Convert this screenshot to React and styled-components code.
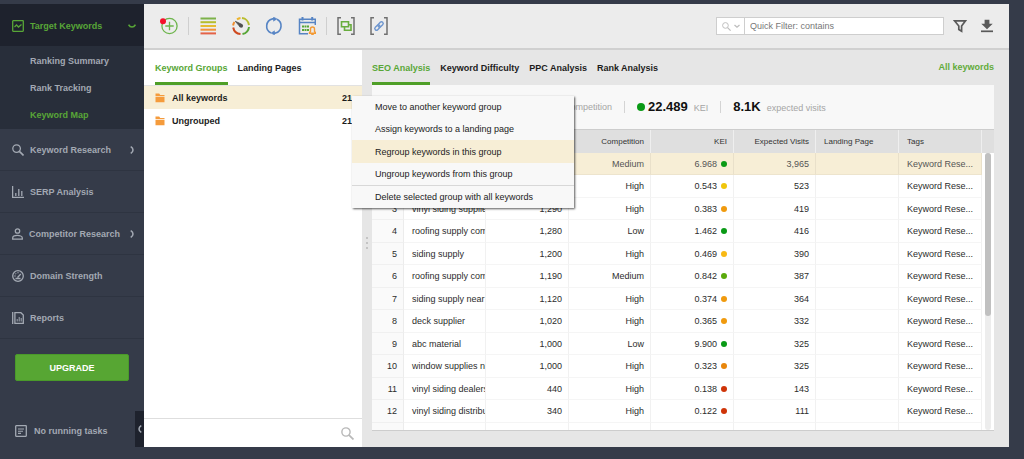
import styled, { createGlobalStyle, css } from "styled-components";

const GlobalStyle = createGlobalStyle`
  * {
    box-sizing: border-box;
  }

  body {
    margin: 0;

    background: #353b49;
    color: #222;
    font: 9px/12px "Liberation Sans", Arial, sans-serif;
  }

  button,
  input {
    margin: 0;
    padding: 0;

    border: 0;
    background: none;
    color: inherit;
    font: inherit;
  }

  a {
    color: inherit;
    text-decoration: none;
  }

  svg {
    display: block;
    flex: none;
  }
`;

const StyledApp = styled.div`
  height: 100vh;
  padding: 4px 15px 12px 0;

  display: flex;
`;

const StyledSidebar = styled.aside`
  position: relative;
  width: 144px;

  display: flex;
  flex: none;
  flex-direction: column;

  color: #a3a9b3;
  font-weight: bold;
`;

const StyledNavItem = styled.a`
  height: 42px;
  padding: 0 8px 0 12px;

  display: flex;
  align-items: center;
  gap: 6px;

  border-bottom: 1px solid #2e3441;

  svg:last-child:not(:first-child) {
    margin-left: auto;
  }

  ${(props) =>
    props.$active &&
    css`
      padding-top: 2px;

      border-bottom: 0;
      background: #1e222d;
      color: #58a637;
    `}
`;

const StyledSubNav = styled.div`
  height: 83px;
  padding: 2px 0 0 30px;

  display: flex;
  flex-direction: column;

  background: #282e3a;
`;

const StyledSubLink = styled.a`
  line-height: 27px;
  color: ${(props) => (props.$active ? "#58a637" : "inherit")};
`;

const StyledUpgrade = styled.button`
  height: 27px;
  margin: 15px 15px 0;

  border: 1px solid #4a9a2a;
  border-radius: 2px;
  background: #57a633;
  color: #fff;
  font-weight: bold;
`;

const StyledTasks = styled.div`
  margin: auto 0 10px 15px;

  display: flex;
  align-items: center;
  gap: 7px;
`;

const StyledCollapse = styled.button`
  position: absolute;
  right: 0;
  bottom: 0;
  width: 9px;
  height: 36px;

  display: grid;
  place-items: center;

  background: #1e222d;
`;

const StyledMain = styled.main`
  min-width: 0;

  display: flex;
  flex: 1;
  flex-direction: column;

  background: #e6e6e6;
`;

const StyledToolbar = styled.header`
  height: 46px;
  padding: 0 15px 0 16px;

  display: flex;
  flex: none;
  align-items: center;

  border-bottom: 2px solid #d0d0d0;
  background: #ececec;
`;

const StyledTools = styled.div`
  display: flex;
  gap: 15px;
`;

const StyledDivider = styled.span`
  width: 1px;
  height: 18px;
  margin: 0 10px;

  background: #cfcfcf;
`;

const StyledFilter = styled.div`
  width: 228px;
  height: 18px;
  margin-left: auto;

  display: flex;

  border: 1px solid #cecece;
  background: #fff;
`;

const StyledFilterMode = styled.button`
  width: 28px;

  display: flex;
  flex: none;
  align-items: center;
  justify-content: center;
  gap: 3px;

  border-right: 1px solid #cecece;
`;

const StyledInput = styled.input`
  min-width: 0;
  padding-left: 5px;

  flex: 1;

  outline: 0;

  &::placeholder {
    color: #777;
    opacity: 1;
  }
`;

const StyledActions = styled.div`
  margin-left: 9px;

  display: flex;
  gap: 13px;
`;

const StyledWorkspace = styled.div`
  position: relative;
  min-height: 0;

  display: flex;
  flex: 1;
`;

const StyledGroups = styled.section`
  width: 218px;

  display: flex;
  flex: none;
  flex-direction: column;

  background: #fff;
`;

const StyledTabs = styled.nav`
  height: ${(props) => (props.$inset ? 36 : 35)}px;
  padding-left: ${(props) => (props.$inset ? 11 : 0)}px;

  display: flex;
  flex: none;
  gap: 10px;

  border-bottom: ${(props) => (props.$inset ? "1px solid #e2e2e2" : "0")};
`;

const StyledTab = styled.button`
  padding-top: 3px;

  border-bottom: 3px solid
    ${(props) => (props.$active ? "#4f9f28" : "transparent")};
  color: ${(props) => (props.$active ? "#58a637" : "#1c1c1c")};
  font-weight: bold;
`;

const StyledTabLink = styled.a`
  margin-left: auto;

  color: #62ab3a;
  font-weight: bold;
  line-height: 35px;
`;

const StyledGroup = styled.button`
  height: 23px;
  padding: 0 10px 0 11px;

  display: flex;
  align-items: center;
  gap: 7px;

  background: ${(props) => (props.$active ? "#f7eed6" : "transparent")};
  color: #1c1c1c;
  font-weight: bold;
`;

const StyledCount = styled.span`
  margin-left: auto;
`;

const StyledGroupSearch = styled.label`
  height: 29px;
  margin-top: auto;
  padding-right: 8px;

  display: flex;
  align-items: center;

  border-top: 1px solid #dedede;
`;

const StyledSplitter = styled.div`
  width: 10px;
  padding-bottom: 11px;

  display: flex;
  flex: none;
  flex-direction: column;
  align-items: center;
  justify-content: center;
  gap: 3px;
`;

const StyledGrip = styled.span`
  width: 2px;
  height: 2px;

  background: #c4c4c4;
`;

const StyledReport = styled.section`
  min-width: 0;
  padding: 0 15px 16px 0;

  display: flex;
  flex: 1;
  flex-direction: column;
`;

const StyledSummary = styled.div`
  height: 44px;

  display: flex;
  flex: none;
  align-items: center;
  gap: 12px;

  background: #f8f8f8;
`;

const StyledSummaryDivider = styled.span`
  width: 1px;
  height: 12px;

  background: #d4d4d4;
`;

const StyledStat = styled.div`
  min-width: ${(props) => props.$width || 0}px;

  display: flex;
  align-items: baseline;
  justify-content: flex-end;
  gap: 6px;

  color: #a5a5a5;
`;

const StyledValue = styled.strong`
  display: flex;
  align-items: center;
  gap: 3px;

  color: #111;
  font-size: 13px;
  line-height: 16px;
`;

const StyledDot = styled.i`
  width: ${(props) => props.$size || 6}px;
  height: ${(props) => props.$size || 6}px;

  border-radius: 50%;
  background: ${(props) => props.$color};
`;

const StyledGrid = styled.div`
  min-height: 0;

  display: flex;
  flex: 1;

  overflow: hidden;
  border-top: 1px solid #cdcdcd;
  border-bottom: 1px solid #cdcdcd;
  background: #fff;
`;

const StyledTable = styled.table`
  width: 100%;
  min-width: 0;

  table-layout: fixed;
  border-collapse: separate;
  border-spacing: 0;
`;

const StyledTableBox = styled.div`
  min-width: 0;

  flex: 1;
`;

const StyledHeadCell = styled.th`
  height: 23px;
  padding: 0 6px 0 8px;

  overflow: hidden;
  border-right: 1px solid #efefef;
  background: #dfdfdf;
  color: #333;
  font-size: 8px;
  font-weight: normal;
  text-align: ${(props) => props.$align};
  white-space: nowrap;
`;

const StyledRow = styled.tr`
  height: 23px;

  background: ${(props) => (props.$active ? "#f7eed6" : "#fff")};
  color: ${(props) => (props.$active ? "#555" : "#2c2c2c")};

  &:nth-child(odd) {
    height: 22px;
  }
`;

const StyledCell = styled.td`
  padding: ${(props) => (props.$align === "left" ? "0 0 0 8px" : "0 6px 0 0")};

  overflow: hidden;
  border-right: 1px solid rgba(0, 0, 0, 0.05);
  border-bottom: 1px solid rgba(0, 0, 0, 0.04);
  text-align: ${(props) => props.$align};
  white-space: nowrap;

  &:first-child {
    background: ${(props) => (props.$active ? "transparent" : "#fafafa")};
  }
`;

const StyledKei = styled.span`
  display: flex;
  align-items: center;
  justify-content: flex-end;
  gap: 4px;
`;

const StyledScroll = styled.div`
  width: 12px;

  flex: none;

  border-top: 23px solid #dfdfdf;
`;

const StyledTrack = styled.div`
  width: 6px;
  height: 100%;
  margin-left: 3px;

  border-radius: 3px;
  background: #ededed;
`;

const StyledThumb = styled.div`
  height: 59%;

  border-radius: 3px;
  background: #c0c0c0;
`;

const StyledMenu = styled.div`
  position: absolute;
  top: 46px;
  left: 208px;
  width: 222px;

  display: flex;
  flex-direction: column;

  background: #f8f8f8;
  box-shadow: 1px 1px 2px rgba(0, 0, 0, 0.65);
`;

const StyledMenuItem = styled.button`
  height: ${(props) => (props.$active ? 23 : 22)}px;
  padding-left: 23px;

  background: ${(props) => (props.$active ? "#f7eed6" : "transparent")};
  color: #222;
  text-align: left;
`;

const StyledMenuLine = styled.hr`
  width: 100%;
  margin: 0;

  border: 0;
  border-top: 1px solid #d8d8d8;
`;

const Icon = ({ size = 12, box = 18, height, children }) => (
  <svg
    width={size}
    height={height || size}
    viewBox={`0 0 ${box} ${height ? (box * height) / size : box}`}
    fill="none"
    stroke="currentColor"
    strokeWidth="1.3"
    aria-hidden="true"
  >
    {children}
  </svg>
);

const SearchIcon = ({ size = 12, color = "currentColor" }) => (
  <Icon size={size} box={12}>
    <g stroke={color}>
      <circle cx="4.6" cy="4.6" r="3.8" />
      <path d="M7.4 7.4 11.5 11.5" strokeWidth="1.6" />
    </g>
  </Icon>
);

const navIcons = {
  target: (
    <Icon box={12}>
      <rect x="0.7" y="0.7" width="10.6" height="10.6" rx="0.5" />
      <path d="M2.5 7 4.5 5l2 2 3-2.5" />
    </Icon>
  ),
  search: <SearchIcon />,
  serp: (
    <Icon box={12}>
      <path d="M.6 0v11.4H12M3.8 10V7M6.8 10V3M9.8 10V5" />
    </Icon>
  ),
  person: (
    <Icon size={11} box={11} height={12}>
      <circle cx="5.5" cy="3" r="2.2" />
      <path d="M.7 11.2V10c0-1.800 2.800-2.600 4.800-2.600s4.800.8 4.800 2.600v1.200Z" />
    </Icon>
  ),
  gauge: (
    <Icon box={12}>
      <circle cx="6" cy="6" r="5.3" />
      <path d="M5.5 7.5 8.8 4M2.5 6h1M6 2.3v1M3.5 3.5l.6.6M8.5 8.5h-5" />
    </Icon>
  ),
  reports: (
    <Icon box={12}>
      <path d="M.7 0v12M2.9.7h6L11.3 3v8.300H2.900Z" />
      <path d="M5.200 9.500V7M7.200 9.500V5M9.200 9.500V6" strokeWidth="1" />
    </Icon>
  ),
};

const Chevron = ({ turn = 0 }) => (
  <svg width="8" height="8" viewBox="0 0 8 8" aria-hidden="true">
    <path
      d="M2.700 .6C4.600 1.600 5 2.800 5 4S4.600 6.400 2.700 7.400"
      fill="none"
      stroke="currentColor"
      strokeWidth="1.500"
      transform={`rotate(${turn} 4 4)`}
    />
  </svg>
);

const Brackets = () => (
  <path
    d="M4 .8H1v16.400H4M14 .8H17v16.400H14"
    stroke="#707070"
    strokeWidth="1.500"
  />
);

const firstTools = [
  {
    label: "Add keywords",
    art: (
      <>
        <circle cx="9.500" cy="9" r="7.600" stroke="#6db54c" strokeWidth="1.300" />
        <path d="M9.500 4.800v8.400M5.300 9h8.400" stroke="#6db54c" strokeWidth="1.300" />
        <circle cx="3" cy="4.300" r="3" fill="#f5102a" stroke="none" />
      </>
    ),
  },
];

const middleTools = [
  {
    label: "Group keywords",
    art: (
      <g strokeWidth="2">
        <path d="M1.500 1.500h15.500" stroke="#7db24a" />
        <path d="M1.500 5.200h15.500" stroke="#b5bd2e" />
        <path d="M1.500 9h15.500" stroke="#e6bb30" />
        <path d="M1.500 12.700h15.500" stroke="#f0933b" />
        <path d="M1.500 16.400h15.500" stroke="#e46348" />
      </g>
    ),
  },
  {
    label: "Analyze difficulty",
    art: (
      <g strokeWidth="2">
        <path d="M10 1.100A8 8 0 0 1 17 8" stroke="#b9bd2d" />
        <path d="M17 10A8 8 0 0 1 10.500 17" stroke="#58a637" />
        <path d="M8.500 17A8 8 0 0 1 1.200 10.500" stroke="#cf4a20" />
        <path d="M1.100 8.500A8 8 0 0 1 2.500 5" stroke="#ee8d2f" />
        <path d="M5 2.300A8 8 0 0 1 8.500 1" stroke="#ecb42d" />
        <path d="M3.300 4.300 9.800 7.300 8.200 10Z" fill="#505050" stroke="#505050" strokeWidth=".8" />
        <circle cx="9.200" cy="8.800" r="1.900" fill="#505050" stroke="none" />
      </g>
    ),
  },
  {
    label: "Update",
    art: (
      <g stroke="#5684c4" strokeWidth="1.600">
        <path d="M6 16A7.500 7.500 0 0 1 7.500 1.900h2M12 2.200A7.500 7.500 0 0 1 10.500 16.100h-2" />
        <path d="m8.500 0 3.500 1.900-3.500 2.300ZM9.500 18 6 16.100l3.500-2.300Z" fill="#5684c4" strokeWidth=".5" />
      </g>
    ),
  },
  {
    label: "Schedule",
    art: (
      <>
        <path d="M10 16.800H1.500V2.200h15.800V8M1 5.500h16.500" stroke="#5684c4" strokeWidth="1.500" />
        <path d="M4.500 0v3.500M14.200 0v3.500" stroke="#5684c4" strokeWidth="2" />
        <path d="M4 9.500h7M4 13h7" stroke="#58a637" strokeWidth="2.200" strokeDasharray="2 .5" />
        <path d="M11.500 16.200v-.7l1-1V12c0-2.600 4-2.600 4 0v2.500l1 1v.7Z" stroke="#f39a35" strokeWidth="1.400" />
        <path d="M13.200 17.300h2.600" stroke="#f39a35" strokeWidth="1.400" />
      </>
    ),
  },
];

const lastTools = [
  {
    label: "Assign to group",
    art: (
      <>
        <Brackets />
        <path d="M4.500 4.800h7v5h-7ZM11.500 7.800H14v5.400H7.500V9.800" stroke="#68ad3d" strokeWidth="1.600" />
      </>
    ),
  },
  {
    label: "Assign landing page",
    art: (
      <>
        <Brackets />
        <g transform="rotate(-45 9 9)" stroke="#6e96cf" strokeWidth="1.400">
          <rect x="3.800" y="7.300" width="6" height="3.400" rx="1.700" />
          <rect x="8.200" y="7.300" width="6" height="3.400" rx="1.700" />
        </g>
      </>
    ),
  },
];

const groups = ["All keywords", "Ungrouped"];

const columns = [
  { title: "#", width: 32, align: "right" },
  { title: "Keyword", width: 82, align: "left" },
  { title: "# of Searches", width: 83, align: "right" },
  { title: "Competition", width: 82, align: "right" },
  { title: "KEI", width: 83, align: "right" },
  { title: "Expected Visits", width: 82, align: "right" },
  { title: "Landing Page", width: 83, align: "left" },
  { title: "Tags", width: 83, align: "left" },
];

const green = "#0a9a16";
const yellow = "#f0c60c";
const orange = "#f09a0e";
const red = "#cf3408";

const rows = [
  ["siding", "9,900", "Medium", "6.968", green, "3,965"],
  ["vinyl siding", "1,300", "High", "0.543", yellow, "523"],
  ["vinyl siding supplier", "1,290", "High", "0.383", orange, "419"],
  ["roofing supply company", "1,280", "Low", "1.462", green, "416"],
  ["siding supply", "1,200", "High", "0.469", "#f8b914", "390"],
  ["roofing supply companies", "1,190", "Medium", "0.842", "#5aaa0c", "387"],
  ["siding supply near me", "1,120", "High", "0.374", orange, "364"],
  ["deck supplier", "1,020", "High", "0.365", orange, "332"],
  ["abc material", "1,000", "Low", "9.900", green, "325"],
  ["window supplies near me", "1,000", "High", "0.323", "#e8860c", "325"],
  ["vinyl siding dealers", "440", "High", "0.138", red, "143"],
  ["vinyl siding distributors", "340", "High", "0.122", red, "111"],
];

const Tools = ({ items }) => (
  <StyledTools>
    {items.map(({ label, art }) => (
      <button key={label} type="button" aria-label={label}>
        <Icon size={18}>{art}</Icon>
      </button>
    ))}
  </StyledTools>
);

const Sidebar = () => (
  <StyledSidebar>
    <StyledNavItem href="#target" $active>
      {navIcons.target}
      Target Keywords
      <Chevron turn={90} />
    </StyledNavItem>
    <StyledSubNav>
      <StyledSubLink href="#summary">Ranking Summary</StyledSubLink>
      <StyledSubLink href="#tracking">Rank Tracking</StyledSubLink>
      <StyledSubLink href="#map" $active>
        Keyword Map
      </StyledSubLink>
    </StyledSubNav>
    <StyledNavItem href="#research">
      {navIcons.search}
      Keyword Research
      <Chevron />
    </StyledNavItem>
    <StyledNavItem href="#serp">
      {navIcons.serp}
      SERP Analysis
    </StyledNavItem>
    <StyledNavItem href="#competitors">
      {navIcons.person}
      Competitor Research
      <Chevron />
    </StyledNavItem>
    <StyledNavItem href="#domain">
      {navIcons.gauge}
      Domain Strength
    </StyledNavItem>
    <StyledNavItem href="#reports">
      {navIcons.reports}
      Reports
    </StyledNavItem>
    <StyledUpgrade type="button">UPGRADE</StyledUpgrade>
    <StyledTasks>
      <Icon box={12}>
        <rect x="0.7" y="0.7" width="10.6" height="10.6" rx="0.5" />
        <path d="M3 4h6M3 6.200h5M3 8.400h3" strokeWidth="1.100" />
      </Icon>
      No running tasks
    </StyledTasks>
    <StyledCollapse type="button" aria-label="Collapse sidebar">
      <Chevron turn={180} />
    </StyledCollapse>
  </StyledSidebar>
);

const Toolbar = () => (
  <StyledToolbar>
    <Tools items={firstTools} />
    <StyledDivider />
    <Tools items={middleTools} />
    <StyledDivider />
    <Tools items={lastTools} />
    <StyledFilter>
      <StyledFilterMode type="button" aria-label="Filter mode">
        <SearchIcon size={9} color="#bdbdbd" />
        <Icon size={6} box={6}>
          <path d="M.5 2 3 4.200 5.500 2" stroke="#bdbdbd" />
        </Icon>
      </StyledFilterMode>
      <StyledInput
        aria-label="Quick Filter"
        placeholder="Quick Filter: contains"
      />
    </StyledFilter>
    <StyledActions>
      <button type="button" aria-label="Filter">
        <Icon size={14} box={14}>
          <path
            d="M1.500 1.800h11L8.600 7v5.300L5.800 10.500V7Z"
            stroke="#595959"
            strokeWidth="1.700"
          />
        </Icon>
      </button>
      <button type="button" aria-label="Download">
        <Icon size={14} box={14}>
          <path d="M4.600 .8h4.800v4h3.300L7 10.200 1.300 4.800h3.300Z" fill="#595959" stroke="none" />
          <path d="M1 12.300h12" stroke="#595959" strokeWidth="1.700" />
        </Icon>
      </button>
    </StyledActions>
  </StyledToolbar>
);

const Groups = () => (
  <StyledGroups>
    <StyledTabs $inset>
      <StyledTab type="button" $active>
        Keyword Groups
      </StyledTab>
      <StyledTab type="button">Landing Pages</StyledTab>
    </StyledTabs>
    {groups.map((name, index) => (
      <StyledGroup key={name} type="button" $active={index === 0}>
        <Icon size={10} box={10}>
          <path
            d="M.5 .6h3.700l1 1.300h4.300v1.300h-9ZM.5 4h9V9.300h-9Z"
            fill="#f59b3c"
            stroke="none"
          />
        </Icon>
        {name}
        <StyledCount>21</StyledCount>
      </StyledGroup>
    ))}
    <StyledGroupSearch>
      <StyledInput aria-label="Search groups" />
      <SearchIcon size={13} color="#b8b8b8" />
    </StyledGroupSearch>
  </StyledGroups>
);

const KeywordTable = () => (
  <StyledGrid>
    <StyledTableBox>
      <StyledTable>
        <colgroup>
          {columns.map(({ title, width }) => (
            <col key={title} width={width} />
          ))}
        </colgroup>
        <thead>
          <tr>
            {columns.map(({ title, align }) => (
              <StyledHeadCell key={title} $align={align}>
                {title}
              </StyledHeadCell>
            ))}
          </tr>
        </thead>
        <tbody>
          {rows.map(([keyword, searches, level, kei, color, visits], index) => {
            const active = index === 0;

            return (
              <StyledRow key={keyword} $active={active}>
                <StyledCell $align="right" $active={active}>
                  {index + 1}
                </StyledCell>
                <StyledCell $align="left">{keyword}</StyledCell>
                <StyledCell $align="right">{searches}</StyledCell>
                <StyledCell $align="right">{level}</StyledCell>
                <StyledCell $align="right">
                  <StyledKei>
                    {kei}
                    <StyledDot $color={color} />
                  </StyledKei>
                </StyledCell>
                <StyledCell $align="right">{visits}</StyledCell>
                <StyledCell $align="left" />
                <StyledCell $align="left">Keyword Rese...</StyledCell>
              </StyledRow>
            );
          })}
          <StyledRow>
            {columns.map(({ title, align }) => (
              <StyledCell key={title} $align={align} />
            ))}
          </StyledRow>
        </tbody>
      </StyledTable>
    </StyledTableBox>
    <StyledScroll>
      <StyledTrack>
        <StyledThumb />
      </StyledTrack>
    </StyledScroll>
  </StyledGrid>
);

const Report = () => (
  <StyledReport>
    <StyledTabs>
      <StyledTab type="button" $active>
        SEO Analysis
      </StyledTab>
      <StyledTab type="button">Keyword Difficulty</StyledTab>
      <StyledTab type="button">PPC Analysis</StyledTab>
      <StyledTab type="button">Rank Analysis</StyledTab>
      <StyledTabLink href="#all">All keywords</StyledTabLink>
    </StyledTabs>
    <StyledSummary>
      <StyledStat $width={240}>competition</StyledStat>
      <StyledSummaryDivider />
      <StyledStat>
        <StyledValue>
          <StyledDot $color={green} $size={8} />
          22.489
        </StyledValue>
        KEI
      </StyledStat>
      <StyledSummaryDivider />
      <StyledStat>
        <StyledValue>8.1K</StyledValue>
        expected visits
      </StyledStat>
    </StyledSummary>
    <KeywordTable />
  </StyledReport>
);

const ContextMenu = () => (
  <StyledMenu>
    <StyledMenuItem type="button">Move to another keyword group</StyledMenuItem>
    <StyledMenuItem type="button">
      Assign keywords to a landing page
    </StyledMenuItem>
    <StyledMenuItem type="button" $active>
      Regroup keywords in this group
    </StyledMenuItem>
    <StyledMenuItem type="button">
      Ungroup keywords from this group
    </StyledMenuItem>
    <StyledMenuLine />
    <StyledMenuItem type="button">
      Delete selected group with all keywords
    </StyledMenuItem>
  </StyledMenu>
);

const App = () => (
  <>
    <GlobalStyle />
    <StyledApp>
      <Sidebar />
      <StyledMain>
        <Toolbar />
        <StyledWorkspace>
          <Groups />
          <StyledSplitter>
            <StyledGrip />
            <StyledGrip />
            <StyledGrip />
          </StyledSplitter>
          <Report />
          <ContextMenu />
        </StyledWorkspace>
      </StyledMain>
    </StyledApp>
  </>
);

export default App;
